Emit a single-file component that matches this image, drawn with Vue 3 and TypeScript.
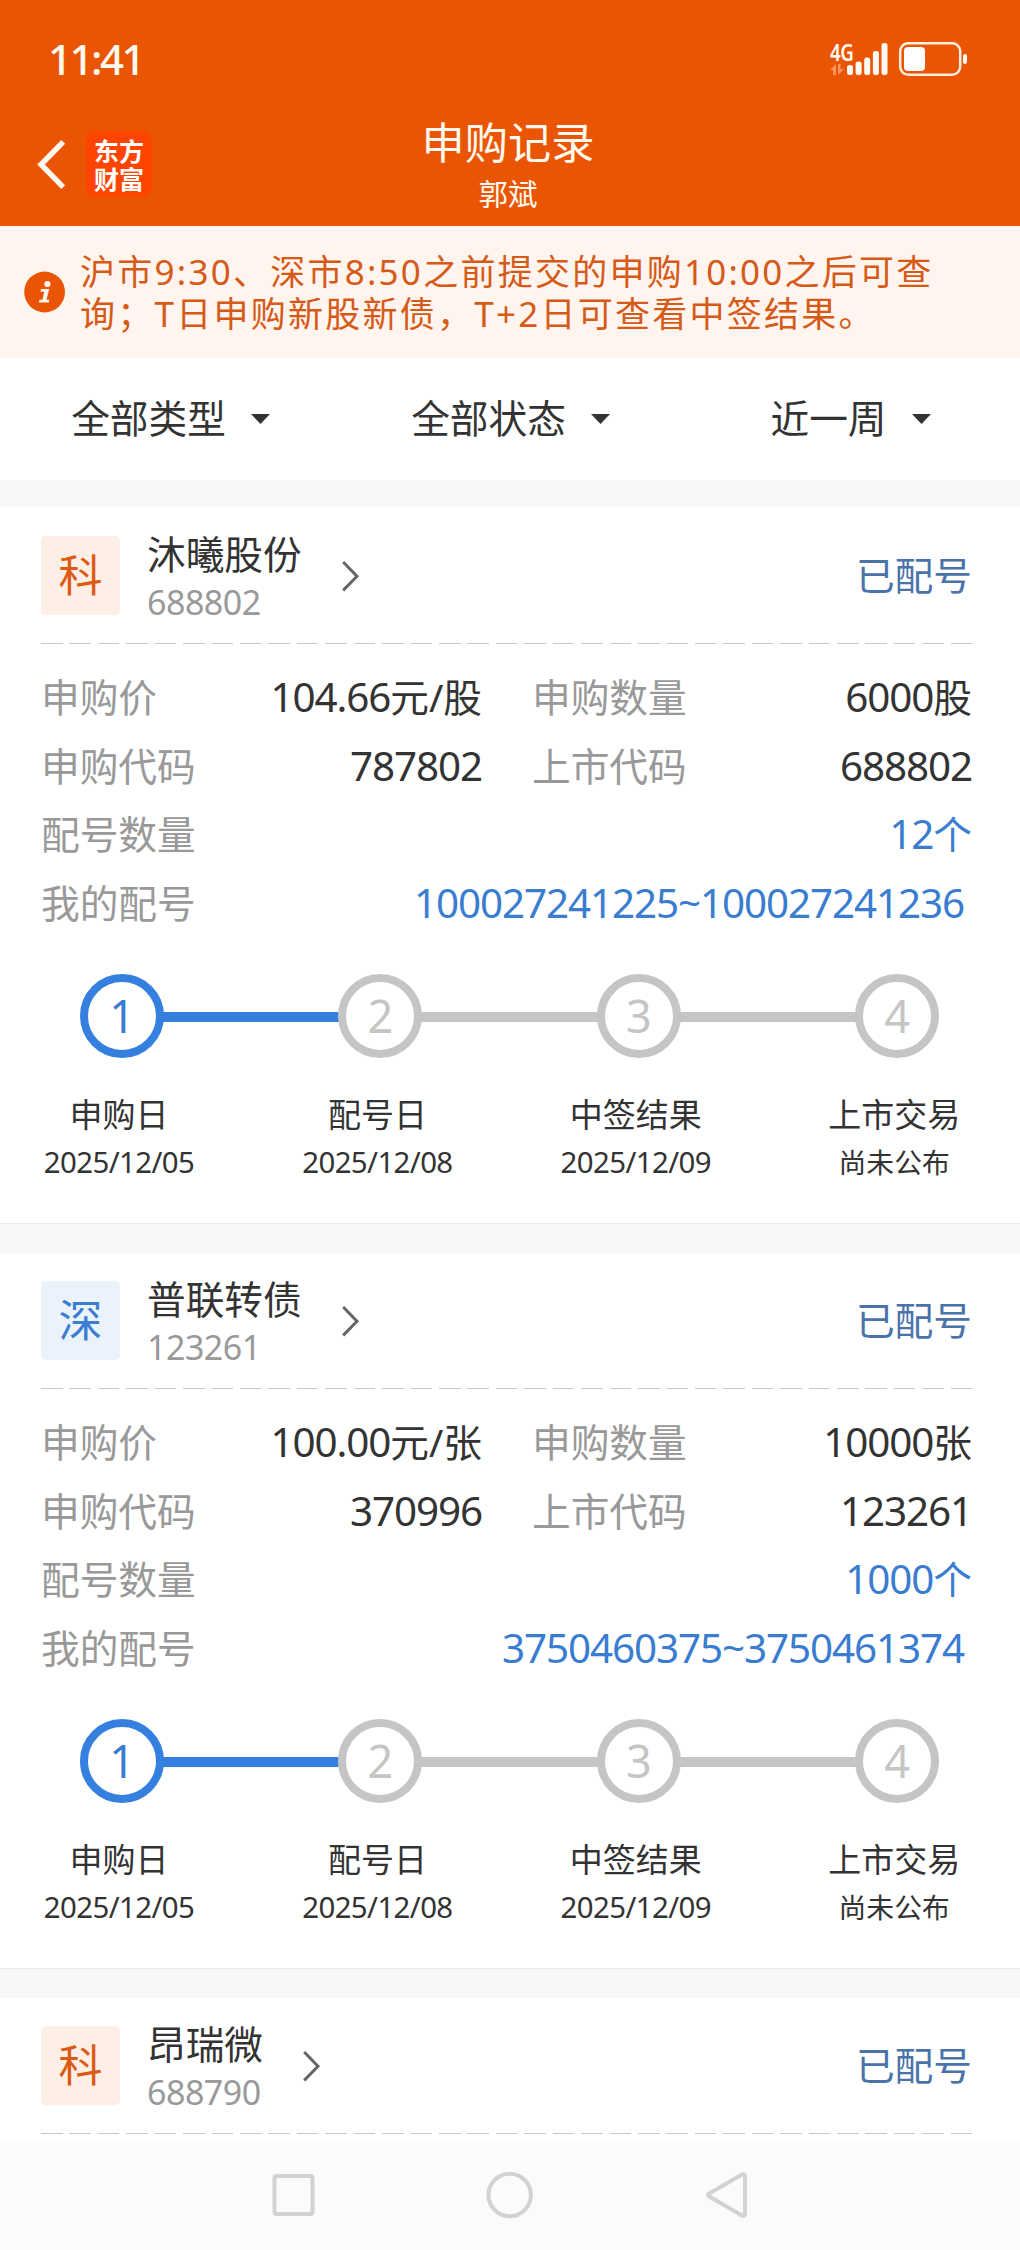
<script setup lang="ts">
interface Amount {
  num: string
  unit?: string
}

interface Step {
  title: string
  date?: string
  note?: string
}

interface RecordItem {
  tag: string
  tone: 'orange' | 'blue'
  name: string
  code: string
  status: string
  price: Amount
  quantity: Amount
  applyCode: string
  listCode: string
  allotCount: Amount
  allotRange: string
}

const filters: string[] = ['全部类型', '全部状态', '近一周']

const steps: Step[] = [
  { title: '申购日', date: '2025/12/05' },
  { title: '配号日', date: '2025/12/08' },
  { title: '中签结果', date: '2025/12/09' },
  { title: '上市交易', note: '尚未公布' },
]

const records: RecordItem[] = [
  {
    tag: '科', tone: 'orange', name: '沐曦股份', code: '688802', status: '已配号',
    price: { num: '104.66', unit: '元/股' }, quantity: { num: '6000', unit: '股' },
    applyCode: '787802', listCode: '688802',
    allotCount: { num: '12', unit: '个' }, allotRange: '100027241225~100027241236',
  },
  {
    tag: '深', tone: 'blue', name: '普联转债', code: '123261', status: '已配号',
    price: { num: '100.00', unit: '元/张' }, quantity: { num: '10000', unit: '张' },
    applyCode: '370996', listCode: '123261',
    allotCount: { num: '1000', unit: '个' }, allotRange: '3750460375~3750461374',
  },
]

const partial = { tag: '科', tone: 'orange', name: '昂瑞微', code: '688790', status: '已配号' }
</script>

<template>
  <div class="screen">
    <header class="top">
      <div class="statusbar">
        <span class="clock">11:41</span>
        <div class="sysicons">
          <div class="netcol">
            <span class="net">4G</span>
            <svg width="14" height="11" viewBox="0 0 14 11" fill="#ff9360">
              <path d="M0 6 L6 0 V11 H3 V6 Z" />
              <path d="M8 0 H10.5 V5 H14 L8 11 Z" />
            </svg>
          </div>
          <svg width="124" height="36" viewBox="16 0 124 36">
            <g fill="#fffaf2">
              <rect x="17" y="23" width="6" height="10" rx="2.5" />
              <rect x="25.6" y="19.5" width="6" height="13.5" rx="2.5" />
              <rect x="34.2" y="15.5" width="6" height="17.5" rx="2.5" />
              <rect x="42.9" y="9" width="6" height="24" rx="2.5" />
              <rect x="51.5" y="1" width="6" height="32" rx="2.5" />
              <rect x="74" y="5" width="21" height="24" rx="4" fill="#fff" />
              <rect x="133" y="12" width="4" height="10" rx="2" />
            </g>
            <rect x="70.2" y="1.2" width="60" height="31.6" rx="8" fill="none" stroke="#ffeeda" stroke-width="2.5" />
          </svg>
        </div>
      </div>
      <div class="titlebar">
        <div class="side">
          <svg width="30" height="52" viewBox="0 0 30 52" fill="none" stroke="#fff8f0" stroke-width="5.4">
            <path d="M27.2 3.8 L5 26.5 L27.2 49.2" stroke-linejoin="miter" />
          </svg>
          <div class="logo"><span>东方</span><span>财富</span></div>
        </div>
        <div class="heading">
          <h1>申购记录</h1>
          <p>郭斌</p>
        </div>
        <div class="side"></div>
      </div>
    </header>

    <section class="notice">
      <svg width="42" height="42" viewBox="0 0 42 42">
        <circle cx="20.6" cy="21" r="20.4" fill="#e95504" />
        <g fill="#fff4ee">
          <circle cx="23.4" cy="13" r="3.1" />
          <path d="M17 18 H25.2 L22.6 28.8 H25.4 L24.9 31.6 H14.8 L15.4 28.8 H18.4 L20.2 20.8 H16.4 Z" />
        </g>
      </svg>
      <p>
        沪市9:30、深市8:50之前提交的申购10:00之后可查<br />询；T日申购新股新债，T+2日可查看中签结果。
      </p>
    </section>

    <nav class="filters">
      <button v-for="f in filters" :key="f" type="button">
        <span>{{ f }}</span>
        <svg width="19" height="10" viewBox="0 0 19 10"><path d="M0 0 H19 L9.5 10 Z" fill="#333" /></svg>
      </button>
    </nav>

    <main class="list">
      <article v-for="r in records" :key="r.name" class="card">
        <div class="head">
          <span class="tile" :class="r.tone">{{ r.tag }}</span>
          <div class="ident">
            <span class="name">{{ r.name }}</span>
            <span class="code">{{ r.code }}</span>
          </div>
          <svg class="chev" width="18" height="32" viewBox="0 0 18 32" fill="none" stroke="#666" stroke-width="3">
            <path d="M1.2 2 L15 16.2 L1.2 30.4" />
          </svg>
          <span class="status">{{ r.status }}</span>
        </div>
        <div class="dash"></div>
        <div class="facts">
          <div class="row">
            <div class="pair left"><span class="label">申购价</span><span class="value"><span class="num">{{ r.price.num }}</span>{{ r.price.unit }}</span></div>
            <div class="pair right"><span class="label">申购数量</span><span class="value"><span class="num">{{ r.quantity.num }}</span>{{ r.quantity.unit }}</span></div>
          </div>
          <div class="row">
            <div class="pair left"><span class="label">申购代码</span><span class="value"><span class="num">{{ r.applyCode }}</span></span></div>
            <div class="pair right"><span class="label">上市代码</span><span class="value"><span class="num">{{ r.listCode }}</span></span></div>
          </div>
          <div class="row">
            <span class="label">配号数量</span>
            <span class="value link"><span class="num">{{ r.allotCount.num }}</span>{{ r.allotCount.unit }}</span>
          </div>
          <div class="row">
            <span class="label">我的配号</span>
            <span class="value link range"><span class="num">{{ r.allotRange }}</span></span>
          </div>
        </div>
        <div class="track">
          <template v-for="(s, i) in steps" :key="s.title">
            <span v-if="i > 0" class="bar" :class="{ on: i === 1 }"></span>
            <span class="dot" :class="{ on: i === 0 }">{{ i + 1 }}</span>
          </template>
        </div>
        <div class="captions">
          <div v-for="s in steps" :key="s.title" class="caption">
            <span class="step-title">{{ s.title }}</span>
            <span v-if="s.date" class="step-date">{{ s.date }}</span>
            <span v-else class="step-note">{{ s.note }}</span>
          </div>
        </div>
      </article>

      <article class="card">
        <div class="head">
          <span class="tile" :class="partial.tone">{{ partial.tag }}</span>
          <div class="ident">
            <span class="name">{{ partial.name }}</span>
            <span class="code">{{ partial.code }}</span>
          </div>
          <svg class="chev" width="18" height="32" viewBox="0 0 18 32" fill="none" stroke="#666" stroke-width="3">
            <path d="M1.2 2 L15 16.2 L1.2 30.4" />
          </svg>
          <span class="status">{{ partial.status }}</span>
        </div>
        <div class="dash"></div>
      </article>
    </main>

    <footer class="sysnav">
      <svg width="48" height="48" viewBox="0 0 48 48" fill="none" stroke="#d2d2d2" stroke-width="4">
        <rect x="4.5" y="5" width="38" height="38" rx="2" />
      </svg>
      <svg width="48" height="48" viewBox="0 0 48 48" fill="none" stroke="#d2d2d2" stroke-width="4">
        <circle cx="23.7" cy="24" r="21.2" />
      </svg>
      <svg width="48" height="48" viewBox="0 0 48 48" fill="none" stroke="#d2d2d2" stroke-width="4" stroke-linejoin="round">
        <path d="M7.2 22.4 L40 3.4 Q43 2.4 43 5.4 V42.6 Q43 45.6 40 44.6 L7.2 25.6 Q5 24 7.2 22.4 Z" />
      </svg>
    </footer>
  </div>
</template>

<style>
body {
  margin: 0;
  background: #fff;
}
</style>

<style scoped>
.screen {
  width: 1020px;
  height: 2250px;
  display: flex;
  flex-direction: column;
  overflow: hidden;
  background: #fff;
  color: #333;
  font-family: "Noto Sans", "Noto Sans CJK SC", sans-serif;
  font-size: 38.7px;
}
.screen * {
  box-sizing: border-box;
}
h1,
p {
  margin: 0;
  font-weight: 400;
}

.top {
  flex: none;
  height: 226px;
  background: #e95504;
  color: #fff9ee;
}
.statusbar {
  height: 120px;
  padding: 0 50px 0 48px;
  display: flex;
  justify-content: space-between;
  align-items: center;
}
.clock {
  font-size: 42px;
  font-weight: 500;
  letter-spacing: -2.5px;
  line-height: 58px;
  padding-bottom: 2px;
}
.sysicons {
  display: flex;
  height: 36px;
}
.netcol {
  width: 16px;
  display: flex;
  flex-direction: column;
}
.netcol svg {
  flex: none;
  margin-top: 3px;
}
.net {
  width: 30px;
  height: 19px;
  font-size: 24px;
  font-weight: 600;
  letter-spacing: -0.5px;
  line-height: 19px;
  color: #fffaf2;
  transform: scaleX(0.78);
  transform-origin: left;
}
.titlebar {
  height: 106px;
  padding: 0 34px 0 36px;
  display: flex;
}
.side {
  width: 120px;
  height: 86px;
  padding-top: 1px;
  display: flex;
  align-items: center;
}
.logo {
  width: 66px;
  height: 66px;
  margin-left: 20px;
  border-radius: 11px;
  background: #ff4400;
  color: #fff;
  display: flex;
  flex-direction: column;
  align-items: center;
  justify-content: center;
  font-family: "Noto Sans CJK SC", sans-serif;
  font-size: 25px;
  font-weight: 700;
  line-height: 28px;
}
.heading {
  width: 704px;
  text-align: center;
}
.heading h1 {
  font-size: 43.2px;
  line-height: 46px;
}
.heading p {
  margin-top: 11px;
  font-size: 29.5px;
  line-height: 34px;
}

.notice {
  flex: none;
  height: 132px;
  padding: 25px 20px 0 24px;
  display: flex;
  background: #fff4ee;
  color: #d55a18;
}
.notice svg {
  flex: none;
  margin: 20px 14px 0 0;
}
.notice p {
  font-size: 35px;
  line-height: 42px;
  letter-spacing: 2.25px;
  white-space: nowrap;
}

.filters {
  flex: none;
  height: 122px;
  display: grid;
  grid-template-columns: repeat(3, 340px);
}
.filters button {
  display: flex;
  align-items: center;
  justify-content: center;
  gap: 25px;
  padding: 0 0 0 1px;
  border: 0;
  background: none;
  font: inherit;
  color: #333;
}
.filters span {
  line-height: 44px;
  padding-bottom: 3px;
}

.list {
  flex: 1;
  min-height: 0;
  overflow: hidden;
  border-top: 27px solid #f6f7f9;
}
.card {
  height: 745px;
  border-bottom: 28px solid #f6f7f9;
  box-shadow: 0 1px 0 #f6f7f9, inset 0 -1px 0 #e8eaeb;
}
.head {
  height: 136px;
  padding: 29px 48px 0 41px;
  display: flex;
}
.tile {
  width: 79px;
  height: 79px;
  border-radius: 5px;
  font-size: 44px;
  line-height: 79px;
  text-align: center;
}
.tile.orange {
  background: #fdeee6;
  color: #dc5a14;
}
.tile.blue {
  background: #eaf2fc;
  color: #3a7dd2;
}
.ident {
  margin-left: 27px;
  display: flex;
  flex-direction: column;
}
.name {
  line-height: 36px;
}
.code {
  margin-top: 15px;
  font-size: 34px;
  line-height: 30px;
  letter-spacing: -0.5px;
  color: #999;
}
.chev {
  margin: 24px 0 0 40px;
}
.status {
  margin-left: auto;
  line-height: 79px;
  color: #4a73aa;
}
.dash {
  height: 1px;
  margin: 0 48px 0 41px;
  background: repeating-linear-gradient(90deg, #c8c8c8 0 21.6px, transparent 21.6px 28.43px);
}

.facts {
  padding: 19px 48px 0 41px;
}
.row {
  height: 68.5px;
  display: flex;
  justify-content: space-between;
  line-height: 68px;
}
.pair {
  display: flex;
  justify-content: space-between;
}
.pair.left {
  width: 441px;
}
.pair.right {
  width: 440px;
}
.label {
  color: #999;
}
.num {
  font-size: 40.4px;
  letter-spacing: -1.1px;
}
.link {
  color: #3a7dd0;
}
.range {
  padding-right: 8px;
}

.track {
  height: 84px;
  margin: 37px 0 0 80px;
  display: flex;
  align-items: center;
}
.dot {
  width: 84px;
  height: 84px;
  border: 8px solid #c5c5c5;
  border-radius: 50%;
  font-size: 45px;
  line-height: 68px;
  text-align: center;
  color: #c5c5c5;
}
.bar {
  width: 176.4px;
  height: 10px;
  margin: 2px -1px 0;
  background: #c5c5c5;
}
.on {
  border-color: #3580df;
  color: #3a7dd0;
}
.bar.on {
  background: #3580df;
}

.captions {
  padding: 35px 0 0 19px;
  display: grid;
  grid-template-columns: repeat(4, 200px);
  column-gap: 58.4px;
}
.caption {
  display: flex;
  flex-direction: column;
  align-items: center;
}
.step-title {
  font-size: 33px;
  line-height: 44px;
}
.step-date,
.step-note {
  margin-top: 5px;
  font-size: 29.4px;
  line-height: 40px;
  letter-spacing: -0.6px;
}
.step-note {
  font-size: 27.8px;
  letter-spacing: 0;
}

.sysnav {
  flex: none;
  height: 110px;
  display: flex;
  justify-content: center;
  align-items: center;
  gap: 168px;
  background: #fbfbfb;
}
</style>
